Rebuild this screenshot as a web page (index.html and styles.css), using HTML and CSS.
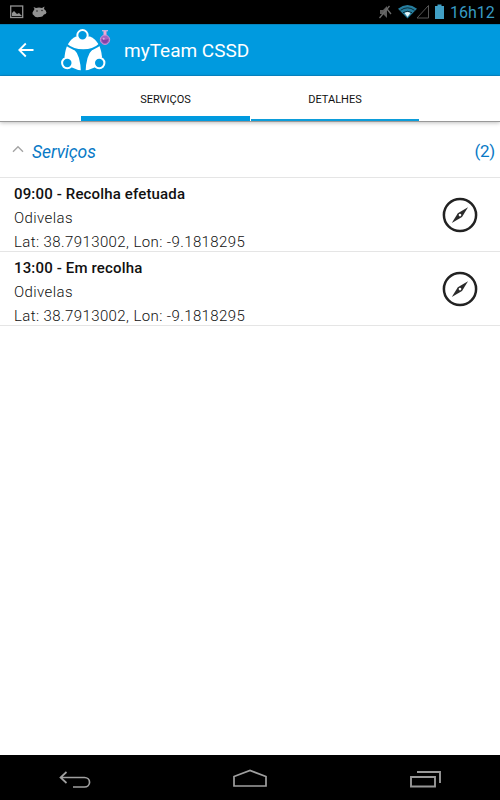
FILE: index.html
```html
<!DOCTYPE html>
<html lang="pt">
<head>
    <meta charset="UTF-8">
    <meta name="viewport" content="width=device-width, initial-scale=1.0">
    <title>myTeam CSSD</title>
    <link rel="stylesheet" href="styles.css">
</head>
<body>
    <div class="status-bar">
        <svg class="status-left" width="50" height="24" viewBox="0 0 50 24">
            <rect x="10.7" y="6" width="12" height="11.5" fill="none" stroke="#929292" stroke-width="1.3"/>
            <path d="M12 16v-3l2-2 3 3 2-1 3 3z" fill="#929292"/>
            <path d="M34.500 9l-1-2 2.500 1q3-1 6 0l2.500-1.500-.5 2.500q2 1 2.500 3.500-.5 2-2.500 2-1.500 3-5 2.500-4 1-5-1.500-2-1-1.500-3z" fill="#929292"/>
            <circle cx="37" cy="11" r=".7" fill="#111"/>
            <circle cx="42" cy="10.500" r=".7" fill="#111"/>
        </svg>
        <svg class="status-right" width="72" height="24" viewBox="376 0 72 24">
            <path d="M380 10h3l4-4v12l-4-4h-3z" fill="#5d5d5d"/>
            <path d="M379.500 18l10-12M387 9l4 5" fill="none" stroke="#6b6b6b" stroke-width="1.300"/>
            <path d="M398 8.700Q407.500 1.500 417 8.700L407.500 18.500z" fill="#267e9f"/>
            <path d="M400.500 10.300q7-5 14 0M403 12.700q4.500-3 9 0" fill="none" stroke="#061820" stroke-width=".8"/>
            <path d="M404.500 13q3-1.800 6 0l-3 4z" fill="#e4f6fb"/>
            <path d="M417 18L428.500 5.500V18z" fill="none" stroke="#575757"/>
            <path d="M435 6h2.500V4.500h4V6h2.500v13h-9z" fill="#419fc5"/>
        </svg>
        <span class="clock">16h12</span>
    </div>

    <header>
        <svg class="back" width="20" height="20" viewBox="0 0 20 20">
            <path d="M17.500 10H3.500M9.800 3.500L3.300 10l6.500 6.500" fill="none" stroke="#fff" stroke-width="1.800"/>
        </svg>
        <svg class="logo" width="54" height="50" viewBox="59 25 54 50">
            <path d="M76 36.500Q66 41 64.500 57L72 67.500Q83 73.500 94.500 67.500L102 57Q100.500 41 90 36.500z" fill="#fff"/>
            <path d="M65 43.500Q73 50.500 83.200 50.500T101 43.500" fill="none" stroke="#009adf" stroke-width="2.200"/>
            <path d="M74 49.500Q80.500 55 81 73H85.500Q86 55 92.500 49.500z" fill="#009adf"/>
            <g fill="#009adf" stroke="#fff" stroke-width="2">
                <circle cx="82.500" cy="35.300" r="5.200"/>
                <circle cx="67.300" cy="63" r="5.200"/>
                <circle cx="99.200" cy="63" r="5.200"/>
            </g>
            <path d="M102 30.700h6" stroke="#d6b8df" stroke-width="1.200"/>
            <rect x="103.500" y="31" width="3" height="6" fill="#efa9d5"/>
            <circle cx="105" cy="39.800" r="4.700" fill="#a765c0" stroke="#c793d7"/>
            <path d="M101.500 39q3.500 1.500 7 0-.5 4-3.500 4.300-3-.3-3.500-4.300z" fill="#8141a8"/>
            <circle cx="103.700" cy="38.700" r="1" fill="#d8a6e8"/>
        </svg>
        <h1>myTeam CSSD</h1>
    </header>

    <nav class="tabs">
        <div class="tab active">SERVIÇOS</div>
        <div class="tab">DETALHES</div>
    </nav>

    <main>
        <div class="group">
            <svg width="12" height="8" viewBox="0 0 12 8">
                <path d="M1 6.700l5-5 5 5" fill="none" stroke="#a4a4a4" stroke-width="1.400"/>
            </svg>
            <h2>Serviços</h2>
            <span class="count">(2)</span>
        </div>
        <div class="service">
            <div>
                <h3>09:00 - Recolha efetuada</h3>
                <p>Odivelas</p>
                <p>Lat: 38.7913002, Lon: -9.1818295</p>
            </div>
            <svg class="compass" width="36" height="36" viewBox="0 0 36 36">
                <circle cx="18" cy="18" r="16.100" fill="none" stroke="#222" stroke-width="2.500"/>
                <path d="M26 10.300L20 20 9.800 26l6-9.700z" fill="#2b2b2b"/>
                <circle cx="18" cy="18.100" r="1.300" fill="#fff"/>
            </svg>
        </div>
        <div class="service">
            <div>
                <h3>13:00 - Em recolha</h3>
                <p>Odivelas</p>
                <p>Lat: 38.7913002, Lon: -9.1818295</p>
            </div>
            <svg class="compass" width="36" height="36" viewBox="0 0 36 36">
                <circle cx="18" cy="18" r="16.100" fill="none" stroke="#222" stroke-width="2.500"/>
                <path d="M26 10.300L20 20 9.800 26l6-9.700z" fill="#2b2b2b"/>
                <circle cx="18" cy="18.100" r="1.300" fill="#fff"/>
            </svg>
        </div>
    </main>

    <footer>
        <svg width="34" height="20" viewBox="0 0 34 20">
            <path d="M2 8.500h24.500a5 4.700 0 0 1 0 9.500H15M8.500 3L2.500 8.500l6 5.500" fill="none" stroke="#a0a0a0" stroke-width="1.700"/>
        </svg>
        <svg width="36" height="20" viewBox="0 0 36 20">
            <path d="M1 17V7.500L17 1.500l16 6V17z" fill="none" stroke="#a0a0a0" stroke-width="1.700"/>
        </svg>
        <svg width="34" height="20" viewBox="0 0 34 20">
            <path d="M2 8h24v9.500H2zM8 3h23v11" fill="none" stroke="#989898" stroke-width="1.900"/>
        </svg>
    </footer>
</body>
</html>
```
FILE: styles.css
```css
* {
    margin: 0;
    padding: 0;
    box-sizing: border-box;
}

body {
    font-family: Roboto, sans-serif;
    background: #fff;
    color: #222;
    height: 100vh;
    display: flex;
    flex-direction: column;
    overflow: hidden;
}

svg {
    display: block;
    flex: none;
}

.status-bar {
    height: 24px;
    flex: none;
    background: #000;
    display: flex;
    align-items: center;
}

.status-right {
    margin-left: auto;
}

.clock {
    width: 52px;
    padding: 1px 0 0 2px;
    color: #389bc5;
    font-size: 16px;
    line-height: 24px;
}

header {
    height: 52px;
    flex: none;
    background: #009adf;
    border-top: 1px solid #0784bd;
    border-bottom: 1px solid #0788c9;
    display: flex;
    align-items: center;
    padding-left: 16px;
}

.logo {
    margin-left: 23px;
}

h1 {
    margin-left: 11px;
    color: #fff;
    font-size: 19px;
    font-weight: 400;
}

.tabs {
    height: 46px;
    flex: none;
    display: flex;
    justify-content: center;
    gap: 1px;
    border-bottom: 1px solid #999;
    box-shadow: 0 1px 4px rgba(0, 0, 0, 0.25);
}

.tab {
    width: 168px;
    display: flex;
    align-items: center;
    justify-content: center;
    padding-top: 4px;
    border-bottom: 2px solid #0c9dda;
    color: #111;
    font-size: 11px;
    line-height: 14px;
}

.tab.active {
    width: 169px;
    padding-top: 7px;
    border-bottom: 5px solid #009adf;
}

.group {
    height: 56px;
    display: flex;
    align-items: center;
    padding: 4px 5px 0 12px;
    border-bottom: 1px solid #e5e5e5;
}

.group svg {
    margin-bottom: 6px;
}

.group h2 {
    margin-left: 8px;
    color: #0879c6;
    font-size: 17.5px;
    font-weight: 400;
    font-style: italic;
    letter-spacing: -0.1px;
}

.count {
    margin-left: auto;
    padding-bottom: 2px;
    color: #0879c6;
    font-size: 17px;
    letter-spacing: -0.3px;
}

.service {
    height: 74px;
    display: flex;
    align-items: center;
    justify-content: space-between;
    padding: 7px 22px 0 14px;
    border-bottom: 1px solid #e5e5e5;
}

.service h3,
.service p {
    height: 24px;
    line-height: 25px;
    font-size: 15px;
    white-space: nowrap;
}

.service h3 {
    color: #111;
    font-weight: 500;
    letter-spacing: 0.15px;
}

.service p {
    color: #111;
    font-weight: 300;
    letter-spacing: 0.4px;
}

.compass {
    margin-bottom: 7px;
}

footer {
    height: 45px;
    flex: none;
    margin-top: auto;
    background: #000;
    display: flex;
    align-items: center;
    justify-content: space-between;
    padding: 2px 57px 0 58px;
}
```
